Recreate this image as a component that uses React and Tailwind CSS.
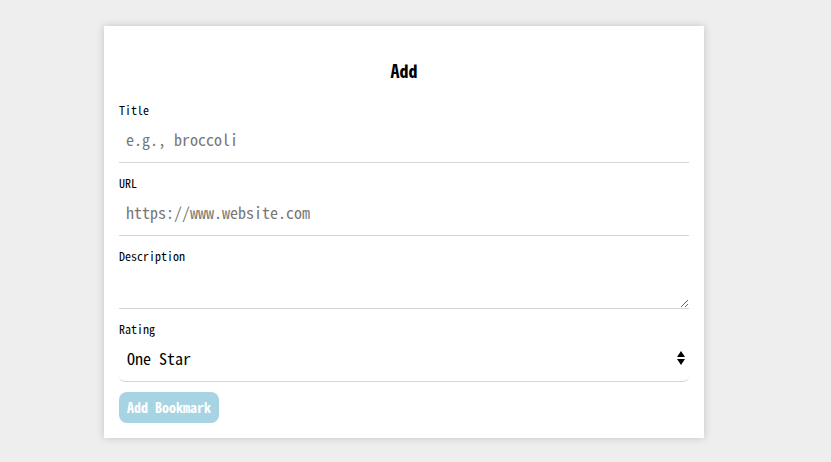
import React from 'react';

const font = { fontFamily: '"Noto Sans Mono CJK JP", "Liberation Mono", monospace' };

function Field({ label, children }) {
  return (
    <div className="mb-[12px]">
      <label className="block text-[12px] leading-[16px] text-black">{label}</label>
      {children}
    </div>
  );
}

export default function App() {
  return (
    <div className="min-h-[462px] bg-[#eeeeee] pt-[26px]" style={font}>
      <div className="ml-[104px] w-[600px] bg-white px-[15px] pt-[32px] pb-[15px] shadow-[0_0_8px_rgba(0,0,0,0.18)]">
        <h2 className="mb-[20px] text-center text-[18px] font-bold leading-[24px] text-black">Add</h2>

        <Field label="Title">
          <input
            placeholder="e.g., broccoli"
            className="block h-[45px] w-full border-b border-[#d6d6d6] px-[7px] pb-[2px] text-[16px] text-black outline-none placeholder:text-[#777777]"
          />
        </Field>

        <Field label="URL">
          <input
            placeholder="https://www.website.com"
            className="block h-[45px] w-full border-b border-[#d6d6d6] px-[7px] pb-[2px] text-[16px] text-black outline-none placeholder:text-[#777777]"
          />
        </Field>

        <Field label="Description">
          <textarea className="block h-[45px] w-full resize-y border-b border-[#d6d6d6] px-[7px] text-[16px] text-black outline-none" />
        </Field>

        <Field label="Rating">
          <div className="relative">
            <select className="block h-[45px] w-full appearance-none rounded-[6px] border-b border-[#d6d6d6] bg-white px-[8px] pb-[3px] text-[16px] text-black outline-none">
              <option>One Star</option>
              <option>Two Stars</option>
              <option>Three Stars</option>
              <option>Four Stars</option>
              <option>Five Stars</option>
            </select>
            <svg
              className="pointer-events-none absolute right-[4px] top-[14px]"
              width="8"
              height="14"
              viewBox="0 0 8 14"
            >
              <path d="M4 0 L8 6 L0 6 Z" fill="#000" />
              <path d="M0 8 L8 8 L4 14 Z" fill="#000" />
            </svg>
          </div>
        </Field>

        <button className="-mt-[2px] h-[31px] rounded-[8px] bg-[#a7d4e2] px-[8px] text-[14px] font-bold text-white">
          Add Bookmark
        </button>
      </div>
    </div>
  );
}
